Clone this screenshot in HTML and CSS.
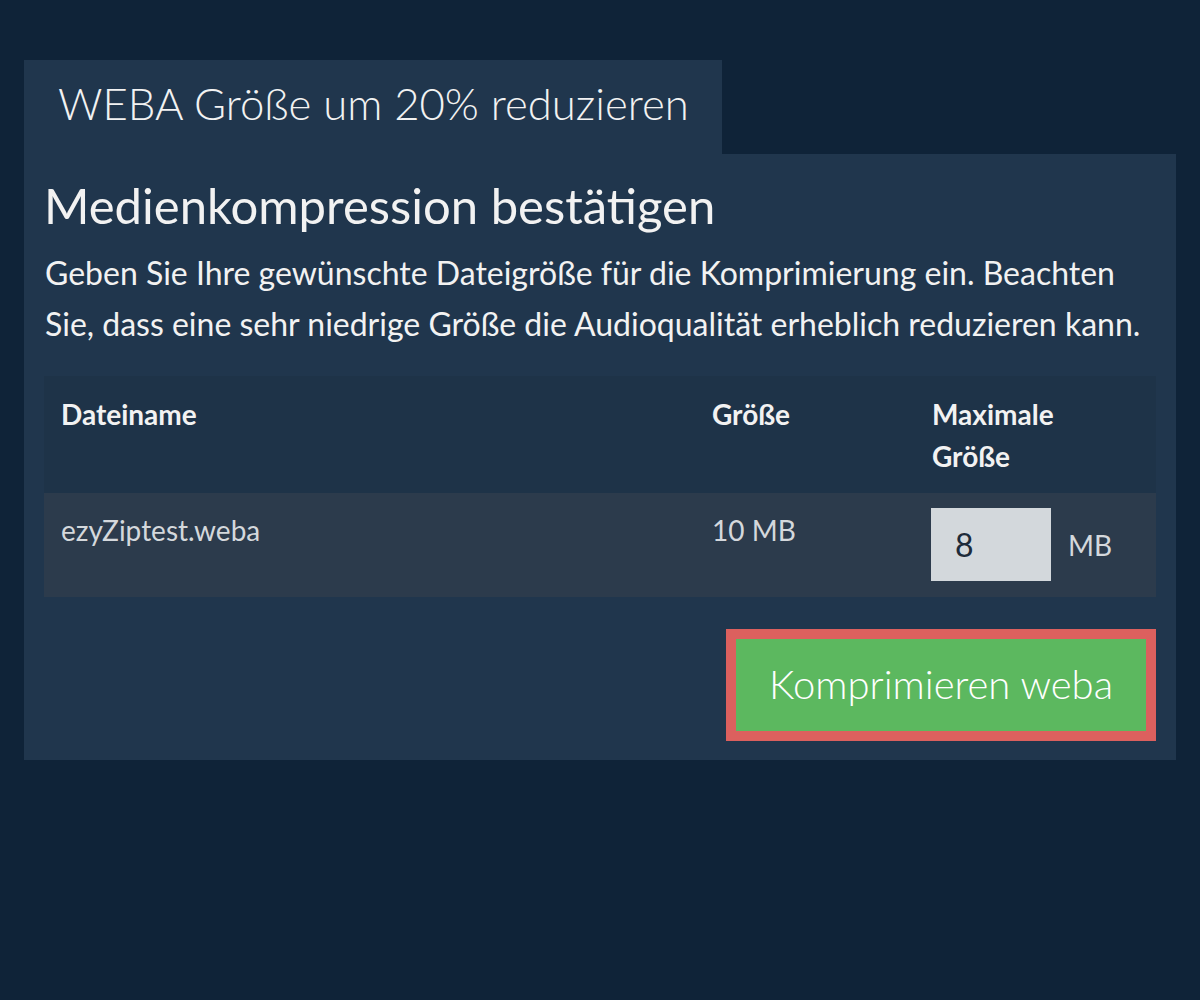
FILE: index.html
```html
<!DOCTYPE html>
<html lang="de">
<head>
    <meta charset="UTF-8">
    <meta name="viewport" content="width=device-width, initial-scale=1.0">
    <title>WEBA komprimieren</title>
    <link rel="stylesheet" href="styles.css">
</head>
<body>
    <div id="compressBox">
        <div class="tab">WEBA Größe um 20% reduzieren</div>
        <div class="panel">
            <h1>Medienkompression bestätigen</h1>
            <p>Geben Sie Ihre gewünschte Dateigröße für die Komprimierung ein. Beachten Sie, dass eine sehr niedrige Größe die Audioqualität erheblich reduzieren kann.</p>
            <table class="files">
                <thead>
                    <tr>
                        <th class="colName">Dateiname</th>
                        <th class="colSize">Größe</th>
                        <th class="colMax">Maximale Größe</th>
                    </tr>
                </thead>
                <tbody>
                    <tr>
                        <td>ezyZiptest.weba</td>
                        <td>10 MB</td>
                        <td>
                            <div class="maxSize">
                                <input type="text" id="maxSize" value="8">
                                <span>MB</span>
                            </div>
                        </td>
                    </tr>
                </tbody>
            </table>
            <div class="actions">
                <button type="button" id="compressBtn">Komprimieren weba</button>
            </div>
        </div>
    </div>
</body>
</html>
```

FILE: styles.css
```css
body {
    margin: 0;
    background-color: #0f2338;
    color: #f2f2f2;
    font-family: Lato, "Open Sans", sans-serif;
}
#compressBox {
    padding: 60px 24px 0 24px;
}
.tab {
    display: inline-block;
    background-color: #20364d;
    font-size: 43.7px;
    font-weight: 300;
    line-height: 54px;
    padding: 16px 33px 24px 34px;
}
.panel {
    background-color: #20364d;
    padding: 22px 20px 19px 20px;
}
.panel h1 {
    margin: 0;
    font-size: 49px;
    font-weight: 400;
    line-height: 58px;
}
.panel p {
    margin: 13px 0 27px 1px;
    font-size: 32px;
    line-height: 51px;
}
.files {
    width: 100%;
    table-layout: fixed;
    border-collapse: collapse;
    font-size: 28px;
}
.files th {
    background-color: #1e3348;
    text-align: left;
    vertical-align: top;
    font-weight: 700;
    line-height: 42px;
    padding: 17px 17px 16px 17px;
}
.files .colName {
    width: 617px;
}
.files .colSize {
    width: 186px;
}
.files th.colMax {
    padding-right: 24px;
}
.files td {
    background-color: #2c3b4c;
    color: #d4d8dc;
    vertical-align: top;
    line-height: 42px;
    padding: 16px 17px 16px 17px;
}
.maxSize {
    display: flex;
    align-items: center;
    gap: 17px;
    margin-left: -1px;
    margin-top: -1px;
}
.maxSize input {
    width: 120px;
    height: 73px;
    box-sizing: border-box;
    border: none;
    background-color: #d3d8dc;
    color: #1d2b3a;
    font-family: Lato, "Open Sans", sans-serif;
    font-size: 32px;
    padding: 0 0 0 24px;
}
.actions {
    display: flex;
    justify-content: flex-end;
    margin-top: 32px;
}
#compressBtn {
    background-color: #5cb85f;
    border: 10px solid #dc605e;
    color: #fff;
    font-family: Lato, "Open Sans", sans-serif;
    font-size: 40px;
    font-weight: 300;
    padding: 19px 33px 21px 33px;
    line-height: 52px;
}
```
